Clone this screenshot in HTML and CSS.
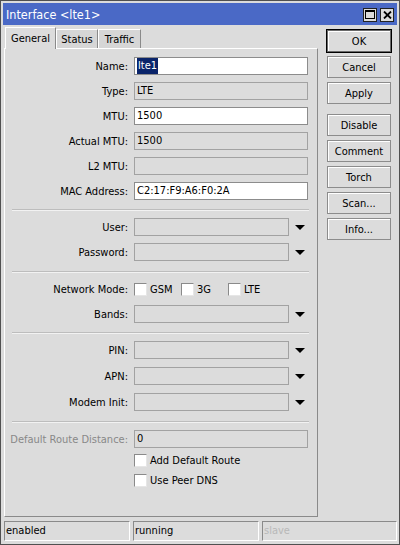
FILE: index.html
```html
<!DOCTYPE html>
<html>
<head>
<meta charset="utf-8">
<link rel="stylesheet" href="styles.css">
</head>
<body>
<div class="window">
  <div class="titlebar">
    <span class="title">Interface &lt;lte1&gt;</span>
    <div class="tb-btns">
      <span class="tb-btn"><svg width="10" height="9" viewBox="0 0 10 9"><rect x="0.5" y="0.5" width="9" height="8" fill="none" stroke="#000"/><rect x="0" y="0" width="10" height="2" fill="#000"/></svg></span>
      <span class="tb-btn"><svg width="9" height="8" viewBox="0 0 9 8"><path d="M1 0.5 L8 7.5 M8 0.5 L1 7.5" stroke="#000" stroke-width="1.8" fill="none"/></svg></span>
    </div>
  </div>
  <div class="main">
    <div class="left">
      <div class="tabs">
        <div class="tab active t-general">General</div>
        <div class="tab t-status">Status</div>
        <div class="tab t-traffic">Traffic</div>
      </div>
      <div class="panel">
        <div class="row"><span class="label">Name:</span><div class="field"><span class="sel">lte1</span></div></div>
        <div class="row"><span class="label">Type:</span><div class="field dis">LTE</div></div>
        <div class="row"><span class="label">MTU:</span><div class="field">1500</div></div>
        <div class="row"><span class="label">Actual MTU:</span><div class="field dis">1500</div></div>
        <div class="row"><span class="label">L2 MTU:</span><div class="field dis"></div></div>
        <div class="row"><span class="label">MAC Address:</span><div class="field">C2:17:F9:A6:F0:2A</div></div>
        <div class="sep"></div>
        <div class="row"><span class="label">User:</span><div class="field dis short"></div><span class="arrow"></span></div>
        <div class="row"><span class="label">Password:</span><div class="field dis short"></div><span class="arrow"></span></div>
        <div class="sep sep-wide"></div>
        <div class="row"><span class="label">Network Mode:</span>
          <div class="checks">
            <span class="chk"><span class="box"></span>GSM</span>
            <span class="chk"><span class="box"></span>3G</span>
            <span class="chk"><span class="box"></span>LTE</span>
          </div>
        </div>
        <div class="row"><span class="label">Bands:</span><div class="field dis short"></div><span class="arrow"></span></div>
        <div class="sep"></div>
        <div class="row tall"><span class="label">PIN:</span><div class="field dis short"></div><span class="arrow"></span></div>
        <div class="row tall"><span class="label">APN:</span><div class="field dis short"></div><span class="arrow"></span></div>
        <div class="row tall"><span class="label">Modem Init:</span><div class="field dis short"></div><span class="arrow"></span></div>
        <div class="sep"></div>
        <div class="row compact"><span class="label muted">Default Route Distance:</span><div class="field dis">0</div></div>
        <div class="cbrow"><span class="box"></span>Add Default Route</div>
        <div class="cbrow"><span class="box"></span>Use Peer DNS</div>
      </div>
    </div>
    <div class="buttons">
      <div class="btn ok">OK</div>
      <div class="btn">Cancel</div>
      <div class="btn">Apply</div>
      <div class="btn group">Disable</div>
      <div class="btn">Comment</div>
      <div class="btn">Torch</div>
      <div class="btn">Scan...</div>
      <div class="btn">Info...</div>
    </div>
  </div>
  <div class="statusbar">
    <div class="sb">enabled</div>
    <div class="sb">running</div>
    <div class="sb faded">slave</div>
  </div>
</div>
</body>
</html>
```

FILE: styles.css
```css
* { box-sizing: border-box; }
html, body { margin: 0; padding: 0; }
body {
  font-family: "DejaVu Sans Condensed", "Liberation Sans", sans-serif;
  font-size: 11px;
  color: #000;
  width: 400px;
  height: 545px;
}
.window {
  width: 400px;
  height: 545px;
  border: 1px solid #505050;
  padding: 2px 2px 0 2px;
  background: #dcdcdc;
  display: flex;
  flex-direction: column;
}
.titlebar {
  height: 22px;
  flex: none;
  background: #4a69c6;
  color: #fff;
  display: flex;
  align-items: center;
  padding: 0 3px;
  font-size: 12.5px;
}
.title { flex: 1; }
.tb-btns { display: flex; gap: 3px; padding-top: 1px; }
.tb-btn {
  width: 14px;
  height: 14px;
  background: #dcdcdc;
  border: 1px solid #222;
  display: flex;
  align-items: center;
  justify-content: center;
}
.main { flex: 1; display: flex; }
.left {
  width: 315px;
  padding-left: 1px;
  display: flex;
  flex-direction: column;
}
.tabs {
  height: 23px;
  flex: none;
  display: flex;
  align-items: flex-end;
  padding-left: 1px;
  position: relative;
  z-index: 1;
}
.tab {
  height: 19px;
  border: 1px solid;
  border-color: #fff #8a8a8a transparent #fff;
  border-bottom: none;
  display: flex;
  align-items: center;
  justify-content: center;
  background: #d6d6d6;
}
.tab.active {
  height: 22px;
  margin-bottom: -1px;
  background: #dcdcdc;
}
.t-general { width: 51px; }
.t-status { width: 42px; }
.t-traffic { width: 43px; }
.panel {
  flex: 1;
  margin-bottom: 1px;
  border: 1px solid;
  border-color: #fff #8a8a8a #8a8a8a #fff;
  padding-top: 8px;
  display: flex;
  flex-direction: column;
}
.row {
  display: flex;
  align-items: center;
  height: 18px;
  margin-bottom: 7px;
  flex: none;
}
.row.tall { margin-bottom: 8px; }
.row.compact { margin-bottom: 4px; }
.label {
  width: 123px;
  margin-right: 6px;
  text-align: right;
  white-space: nowrap;
}
.label.muted { color: #888; }
.field {
  width: 174px;
  height: 18px;
  border: 1px solid #8c8c8c;
  background: #fff;
  padding-left: 2px;
  line-height: 16px;
  white-space: nowrap;
  overflow: hidden;
}
.field.dis { background: #dcdcdc; border-color: #a2a2a2; }
.field.short { width: 155px; }
.sel {
  display: inline-block;
  background: #0a246a;
  color: #fff;
  padding: 0 1px;
  height: 16px;
}
.arrow {
  margin-left: 6px;
  width: 0;
  height: 0;
  border-left: 5px solid transparent;
  border-right: 5px solid transparent;
  border-top: 5px solid #000;
}
.sep {
  height: 2px;
  flex: none;
  border-top: 1px solid #bdbdbd;
  border-bottom: 1px solid #f2f2f2;
  margin: 2px 8px 7px 7px;
}
.sep.sep-wide { margin-top: 3px; }
.checks { display: flex; }
.chk { width: 47px; display: flex; align-items: center; }
.box {
  width: 13px;
  height: 13px;
  background: #fff;
  border: 1px solid;
  border-color: #8a8a8a #e6e6e6 #e6e6e6 #8a8a8a;
  margin-right: 3px;
  flex: none;
}
.cbrow {
  display: flex;
  align-items: center;
  height: 16px;
  margin-left: 129px;
  margin-bottom: 4px;
}
.buttons {
  width: 64px;
  margin-left: 9px;
  padding-top: 5px;
  display: flex;
  flex-direction: column;
  gap: 4px;
}
.btn {
  height: 22px;
  flex: none;
  border: 1px solid #8c8c8c;
  box-shadow: inset 1px 1px #fff;
  display: flex;
  align-items: center;
  justify-content: center;
}
.btn.ok { outline: 1px solid #000; border-color: #6a6a6a; }
.btn.group { margin-top: 6px; }
.statusbar {
  height: 26px;
  flex: none;
  display: grid;
  grid-template-columns: 126px 126px 1fr;
  column-gap: 3px;
  padding: 3px 0 3px 1px;
}
.sb {
  border: 1px solid;
  border-color: #8a8a8a #fff #fff #8a8a8a;
  padding-left: 1px;
  line-height: 18px;
}
.sb.faded { color: #b8b8b8; }
```
